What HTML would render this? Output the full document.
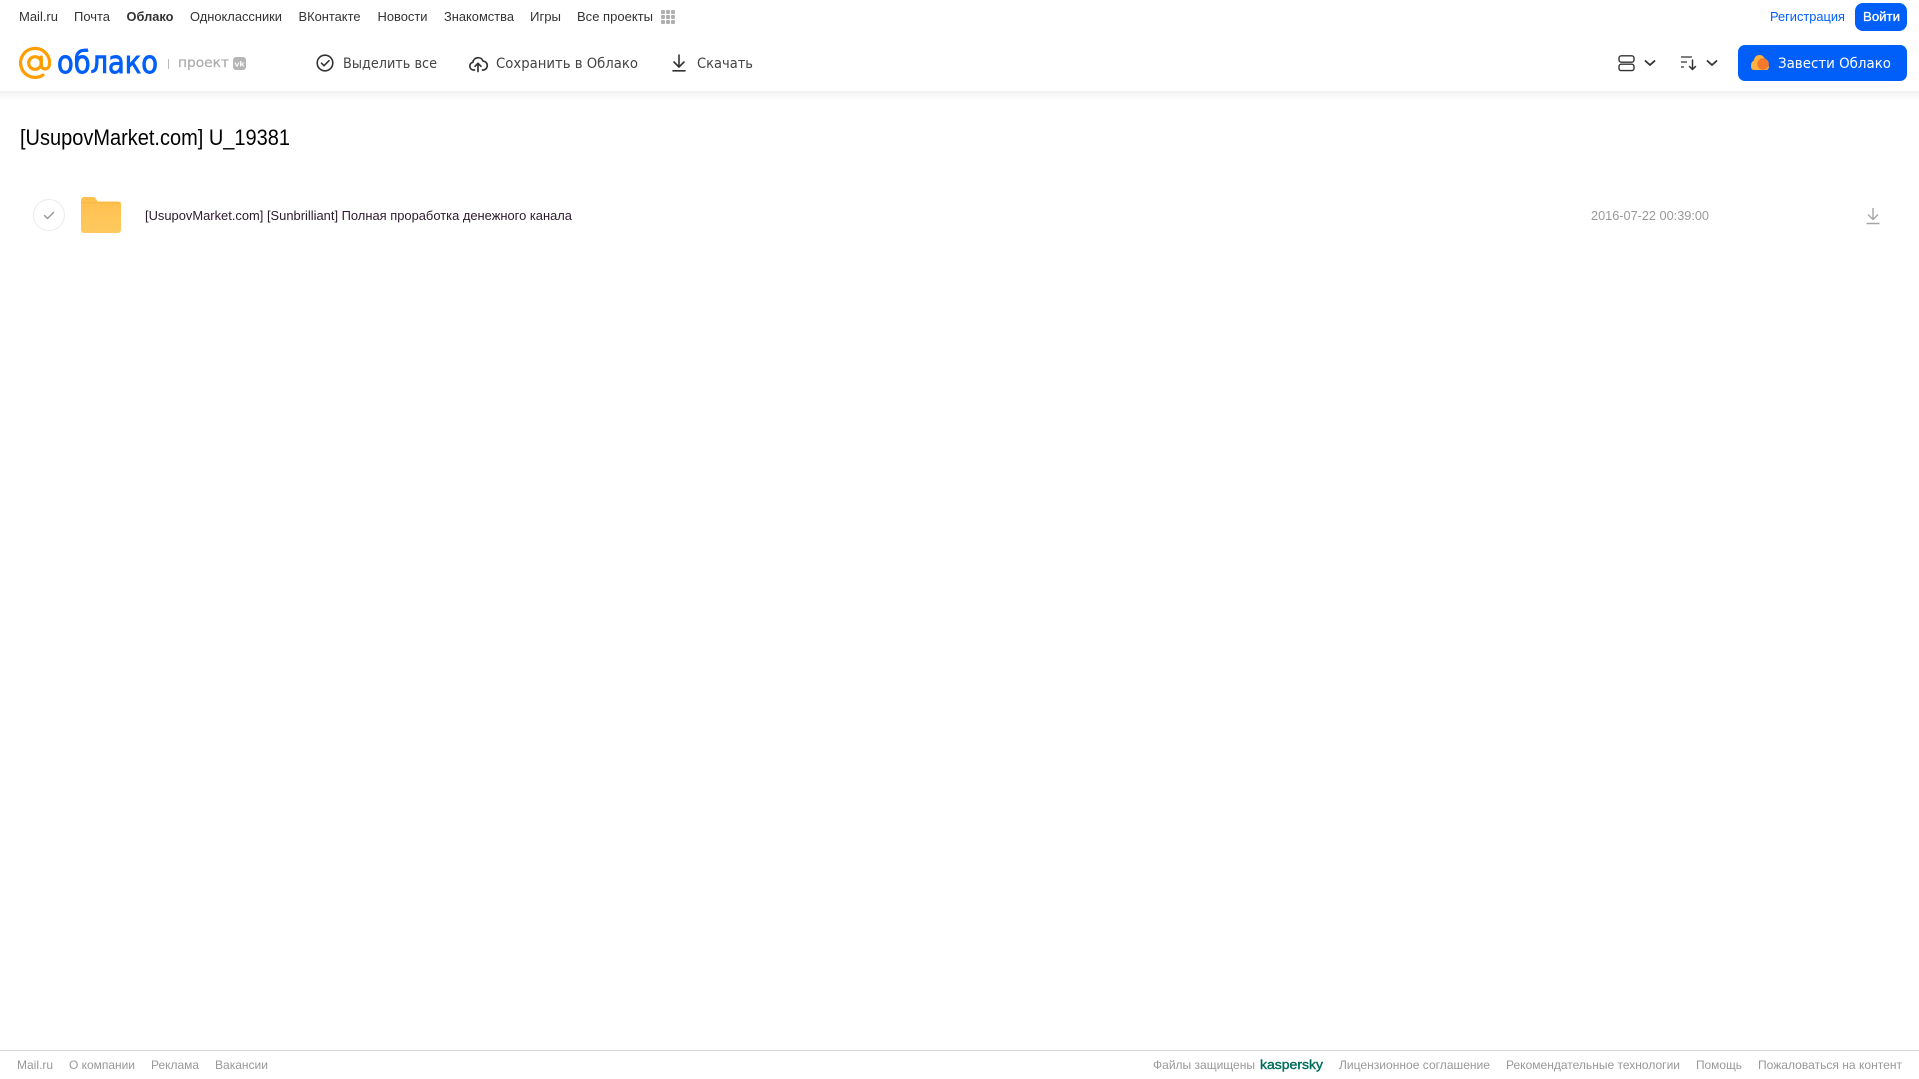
<!DOCTYPE html>
<html lang="ru"><head><meta charset="utf-8"><title>Облако</title>
<style>
html,body{margin:0;padding:0;background:#fff;width:1919px;height:1079px;overflow:hidden}
svg{display:block}
text{font-family:"Liberation Sans",sans-serif}
.n{font-size:13px;fill:#333}
.a{font-size:14px;fill:#444;font-family:"DejaVu Sans",sans-serif}
.f{font-size:12px;fill:#999}
</style></head><body>
<svg xmlns="http://www.w3.org/2000/svg" width="1919" height="1079" viewBox="0 0 1919 1079">
<defs>
<linearGradient id="sh" x1="0" y1="0" x2="0" y2="1"><stop offset="0" stop-color="#f1f1f1"/><stop offset="1" stop-color="#fff"/></linearGradient>
<linearGradient id="fo" x1="0" y1="0" x2="0" y2="1"><stop offset="0" stop-color="#ffc04d"/><stop offset="1" stop-color="#ffc95f"/></linearGradient>
</defs>
<rect width="1919" height="1079" fill="#fff"/>
<rect x="0" y="91" width="1919" height="9" fill="url(#sh)"/>

<!-- top nav -->
<text class="n" x="19" y="21" textLength="39" lengthAdjust="spacingAndGlyphs">Mail.ru</text>
<text class="n" x="74" y="21" textLength="36" lengthAdjust="spacingAndGlyphs">Почта</text>
<text class="n" x="126.500" y="21" textLength="47" lengthAdjust="spacingAndGlyphs" font-weight="700">Облако</text>
<text class="n" x="190" y="21" textLength="92" lengthAdjust="spacingAndGlyphs">Одноклассники</text>
<text class="n" x="298.500" y="21" textLength="62" lengthAdjust="spacingAndGlyphs">ВКонтакте</text>
<text class="n" x="377.500" y="21" textLength="50" lengthAdjust="spacingAndGlyphs">Новости</text>
<text class="n" x="444" y="21" textLength="70" lengthAdjust="spacingAndGlyphs">Знакомства</text>
<text class="n" x="530" y="21" textLength="31" lengthAdjust="spacingAndGlyphs">Игры</text>
<text class="n" x="577" y="21" textLength="76" lengthAdjust="spacingAndGlyphs">Все проекты</text>
<g fill="#b0b0b0">
<rect x="661" y="10" width="4" height="4" rx="1"/><rect x="666" y="10" width="4" height="4" rx="1"/><rect x="671" y="10" width="4" height="4" rx="1"/>
<rect x="661" y="15" width="4" height="4" rx="1"/><rect x="666" y="15" width="4" height="4" rx="1"/><rect x="671" y="15" width="4" height="4" rx="1"/>
<rect x="661" y="20" width="4" height="4" rx="1"/><rect x="666" y="20" width="4" height="4" rx="1"/><rect x="671" y="20" width="4" height="4" rx="1"/>
</g>
<text x="1770" y="21" font-size="13" fill="#005ff9" textLength="75" lengthAdjust="spacingAndGlyphs">Регистрация</text>
<rect x="1855" y="3" width="52" height="28" rx="8" fill="#005ff9"/>
<text x="1863" y="21" font-size="13" fill="#fff" stroke="#fff" stroke-width=".3" textLength="37" lengthAdjust="spacingAndGlyphs">Войти</text>

<!-- logo -->
<g fill="none" stroke="#ff9e00" stroke-width="3.200" stroke-linecap="round">
<circle cx="35" cy="63" r="6.300"/>
<path d="M41.300 57v8.500c0 4.500 7.200 4.800 8.100-.5A14.500 14.500 0 1 0 43 75"/>
</g>
<text x="57" y="73" font-size="31" fill="#005ff9" stroke="#005ff9" stroke-width=".9" style="font-family:'DejaVu Sans',sans-serif" textLength="101" lengthAdjust="spacingAndGlyphs">облако</text>
<rect x="168" y="59" width="1" height="10" fill="#bbb"/>
<text x="178" y="67" font-size="13.500" fill="#aaa" stroke="#aaa" stroke-width=".2" style="font-family:'DejaVu Sans',sans-serif" textLength="51" lengthAdjust="spacingAndGlyphs">проект</text>
<rect x="233" y="57" width="13" height="13" rx="3" fill="#b5b5b5"/>
<text x="234.500" y="66.500" font-size="7.500" font-weight="700" fill="#fff" textLength="10" lengthAdjust="spacingAndGlyphs">vk</text>

<!-- actions -->
<circle cx="325" cy="63" r="7.800" fill="none" stroke="#333" stroke-width="1.600"/>
<path d="M321.500 63.200l2.500 2.500 5-5" fill="none" stroke="#333" stroke-width="1.600" stroke-linecap="round" stroke-linejoin="round"/>
<text class="a" x="343" y="68" textLength="94" lengthAdjust="spacingAndGlyphs">Выделить все</text>

<path d="M474.500 70h-1a3.900 3.900 0 0 1-.6-7.700 5.300 5.300 0 0 1 10.200-1.200 4.500 4.500 0 0 1 .6 8.900h-1.200" fill="none" stroke="#333" stroke-width="1.700" stroke-linecap="round" stroke-linejoin="round"/>
<path d="M478 71.500v-8M475 66.300l3-3 3 3" fill="none" stroke="#333" stroke-width="1.700" stroke-linecap="round" stroke-linejoin="round"/>
<text class="a" x="496" y="68" textLength="142" lengthAdjust="spacingAndGlyphs">Сохранить в Облако</text>

<path d="M679 55v12M674 62l5 5 5-5M673 70.800h12" fill="none" stroke="#333" stroke-width="1.600" stroke-linecap="round" stroke-linejoin="round"/>
<text class="a" x="697" y="68" textLength="56" lengthAdjust="spacingAndGlyphs">Скачать</text>

<!-- view/sort -->
<rect x="1619" y="55.800" width="15" height="6.400" rx="2.200" fill="none" stroke="#333" stroke-width="1.400"/>
<rect x="1619" y="64.200" width="15" height="6.400" rx="2.200" fill="none" stroke="#333" stroke-width="1.400"/>
<path d="M1645.500 61l4.500 4 4.500-4" fill="none" stroke="#333" stroke-width="1.800" stroke-linecap="round" stroke-linejoin="round"/>
<path d="M1681 57h11M1681 62h6M1681 67h3" fill="none" stroke="#333" stroke-width="1.300"/>
<path d="M1692.500 60v9M1689.500 66.500l3 3 3-3" fill="none" stroke="#333" stroke-width="1.500" stroke-linecap="round" stroke-linejoin="round"/>
<path d="M1707.500 61l4.500 4 4.500-4" fill="none" stroke="#333" stroke-width="1.800" stroke-linecap="round" stroke-linejoin="round"/>

<!-- CTA -->
<rect x="1738" y="45" width="169" height="36" rx="7" fill="#005ff9"/>
<circle cx="1756" cy="65" r="5" fill="#ffb23e"/>
<circle cx="1759.500" cy="60.500" r="5.500" fill="#ffb23e"/>
<rect x="1751" y="64" width="18" height="6" rx="3" fill="#ffb23e"/>
<circle cx="1763" cy="64" r="5.800" fill="#f5792b"/>
<text x="1778" y="68" font-size="14" fill="#fff" style="font-family:'DejaVu Sans',sans-serif" textLength="113" lengthAdjust="spacingAndGlyphs">Завести Облако</text>

<!-- title -->
<text x="20" y="145" font-size="22" fill="#000" textLength="270" lengthAdjust="spacingAndGlyphs">[UsupovMarket.com] U_19381</text>

<!-- row -->
<circle cx="49" cy="215" r="15.500" fill="#fff" stroke="#ececec" stroke-width="1"/>
<path d="M44.500 215.500l3 3 6-6" fill="none" stroke="#9a9a9a" stroke-width="1.500" stroke-linecap="round" stroke-linejoin="round"/>
<path d="M81 200a3 3 0 0 1 3-3h8.500c2 0 2.800 1 3.700 2.200l1.600 2.300H118a3 3 0 0 1 3 3V230a3 3 0 0 1-3 3H84a3 3 0 0 1-3-3z" fill="url(#fo)"/>
<rect x="81" y="202" width="40" height="1.500" fill="#f7b23f" opacity=".6"/>
<text x="145" y="220" font-size="13" fill="#2c1a2e" textLength="427" lengthAdjust="spacingAndGlyphs">[UsupovMarket.com] [Sunbrilliant] Полная проработка денежного канала</text>
<text x="1591" y="220" font-size="13" fill="#999" textLength="118" lengthAdjust="spacingAndGlyphs">2016-07-22 00:39:00</text>
<path d="M1873 208v11M1868 214.500l5 5 5-5M1866.500 223.500h13" fill="none" stroke="#a6a6a6" stroke-width="1.400" stroke-linejoin="round"/>

<!-- footer -->
<rect x="0" y="1050" width="1919" height="1" fill="#d9d9d9"/>
<text class="f" x="17" y="1069" textLength="36" lengthAdjust="spacingAndGlyphs">Mail.ru</text>
<text class="f" x="69" y="1069" textLength="66" lengthAdjust="spacingAndGlyphs">О компании</text>
<text class="f" x="151" y="1069" textLength="48" lengthAdjust="spacingAndGlyphs">Реклама</text>
<text class="f" x="215" y="1069" textLength="53" lengthAdjust="spacingAndGlyphs">Вакансии</text>
<text class="f" x="1153" y="1069" textLength="102" lengthAdjust="spacingAndGlyphs">Файлы защищены</text>
<text x="1260" y="1069" font-size="13" fill="#006d5c" stroke="#006d5c" stroke-width=".4" textLength="63" lengthAdjust="spacingAndGlyphs">kaspersky</text>
<text class="f" x="1339" y="1069" textLength="151" lengthAdjust="spacingAndGlyphs">Лицензионное соглашение</text>
<text class="f" x="1506" y="1069" textLength="174" lengthAdjust="spacingAndGlyphs">Рекомендательные технологии</text>
<text class="f" x="1696" y="1069" textLength="46" lengthAdjust="spacingAndGlyphs">Помощь</text>
<text class="f" x="1758" y="1069" textLength="144" lengthAdjust="spacingAndGlyphs">Пожаловаться на контент</text>
</svg>
</body></html>
